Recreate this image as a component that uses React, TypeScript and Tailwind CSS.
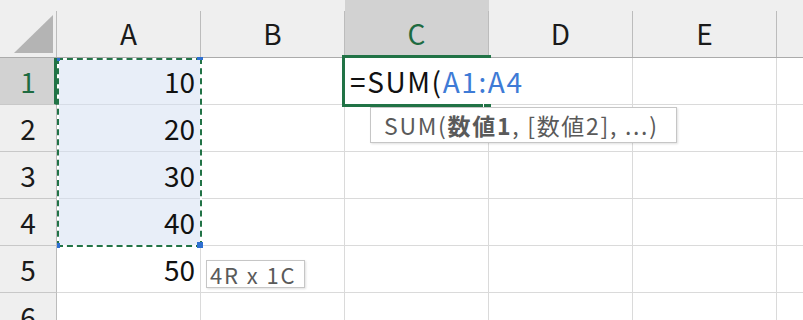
import React from "react";

const COLS = ["A", "B", "C", "D", "E", "F"];
const ROWS = [1, 2, 3, 4, 5, 6];
const VALUES: Record<string, string> = { A1: "10", A2: "20", A3: "30", A4: "40", A5: "50" };

const font = { fontFamily: '"Noto Sans CJK JP", "Noto Sans", sans-serif' };

function ColHeader({ c }: { c: string }) {
  const active = c === "C";
  return (
    <div className={`w-[144px] shrink-0 pt-[11px] ${active ? "bg-[#d2d2d2]" : ""}`}>
      <div
        className={`h-[46px] border-r border-[#bcbcbc] flex items-center justify-center text-[28px] leading-none pb-[2px] ${
          active ? "text-[#1e6b41]" : "text-[#1a1a1a]"
        }`}
      >
        {c === "F" ? "" : c}
      </div>
    </div>
  );
}

function Row({ r }: { r: number }) {
  return (
    <div className="flex h-[47px]">
      <div
        className={`w-[57px] shrink-0 flex items-center justify-center text-[28px] leading-none border-b border-[#c8c8c8] ${
          r === 1
            ? "bg-[#d2d2d2] text-[#1e6b41] border-r-[3px] border-r-[#217346] pl-[2px]"
            : "bg-[#efefef] text-[#1a1a1a] border-r border-r-[#bcbcbc]"
        }`}
      >
        {r}
      </div>
      {COLS.map((c) => {
        const key = `${c}${r}`;
        const sel = c === "A" && r <= 4;
        return (
          <div
            key={key}
            className={`w-[144px] shrink-0 border-r border-b flex items-center justify-end pr-[5px] text-[28px] leading-none text-[#111] ${
              sel ? "bg-[#e8eef8] border-[#d6dce6]" : "border-[#dadada]"
            }`}
          >
            {VALUES[key] ?? ""}
          </div>
        );
      })}
    </div>
  );
}

export default function App() {
  return (
    <div className="relative w-[803px] h-[320px] overflow-hidden bg-white" style={font}>
      {/* header row */}
      <div className="flex h-[58px] bg-[#efefef] border-b border-[#ababab]">
        <div className="relative w-[57px] shrink-0 pt-[11px]">
          <div className="h-[46px] border-r border-[#bcbcbc]" />
          <svg className="absolute left-0 top-0" width="56" height="57" viewBox="0 0 56 57">
            <polygon points="14,53 53,53 53,15" fill="#b4b4b4" />
          </svg>
        </div>
        {COLS.map((c) => (
          <ColHeader key={c} c={c} />
        ))}
      </div>

      {/* body rows */}
      {ROWS.map((r) => (
        <Row key={r} r={r} />
      ))}

      {/* selection marching ants over A1:A4 */}
      <div className="absolute left-[57px] top-[58px] w-[145px] h-[189px] border-2 border-white">
        <div className="absolute -inset-[2px] border-2 border-dashed border-[#217346]" />
        <div className="absolute -left-[2px] -top-[2px] w-[3px] h-[3px] bg-[#2e6fd0]" />
        <div className="absolute -right-[3px] -top-[3px] w-[6px] h-[3px] bg-[#2e6fd0]" />
        <div className="absolute -left-[2px] -bottom-[3px] w-[3px] h-[5px] bg-[#2e6fd0]" />
        <div className="absolute -right-[3px] -bottom-[3px] w-[6px] h-[6px] bg-[#2e6fd0]" />
      </div>

      {/* C1 in-cell editor */}
      <div className="absolute left-[342px] top-[55px] w-[149px] h-[52px] bg-white border-l-[3px] border-t-[3px] border-b-[3px] border-[#217346] flex items-center pl-[5px]">
        <div className="flex items-center text-[28px] leading-none tracking-[1.6px] text-[#111] whitespace-nowrap bg-white pr-[2px] h-[46px]">
          <span>=SUM(</span>
          <span className="text-[#3e7bd6]">A1:A4</span>
        </div>
        <div className="absolute left-[138px] -bottom-[3px] w-[1px] h-[3px] bg-white" />
      </div>

      {/* function argument tooltip */}
      <div className="absolute left-[370px] top-[107px] w-[307px] h-[36px] bg-white border border-[#c6c6c6] shadow-[1px_1px_2px_rgba(0,0,0,0.12)] flex items-center pl-[13px] text-[23px] leading-none tracking-[1.7px] text-[#5a5a5a] whitespace-nowrap">
        <span>SUM(</span>
        <span className="font-bold">数値1</span>
        <span>, [数値2], ...)</span>
      </div>

      {/* selection size tooltip */}
      <div className="absolute left-[206px] top-[260px] w-[99px] h-[28px] bg-white border border-[#c6c6c6] shadow-[1px_1px_2px_rgba(0,0,0,0.12)] flex items-center pl-[3px] text-[22px] leading-none tracking-[1.9px] text-[#5a5a5a] whitespace-nowrap">
        4R x 1C
      </div>
    </div>
  );
}
